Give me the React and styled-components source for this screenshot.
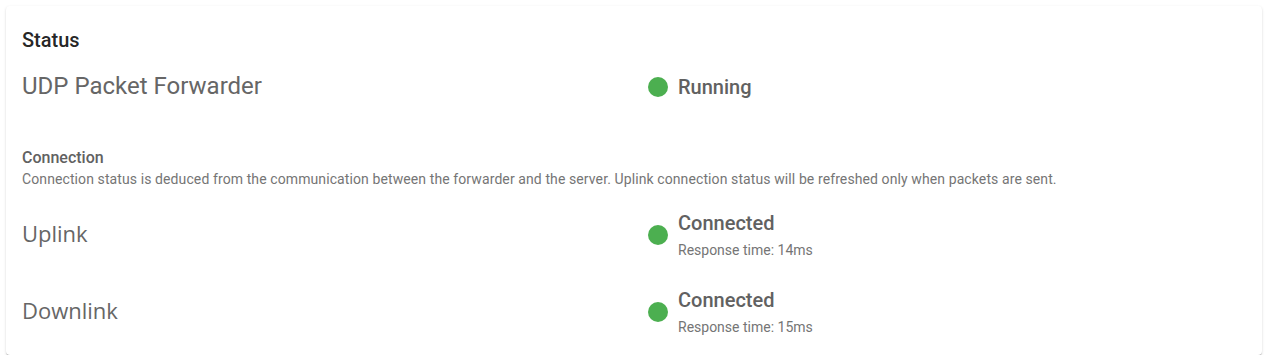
import React from "react";
import styled, { createGlobalStyle } from "styled-components";

const GlobalStyle = createGlobalStyle`
  body {
    margin: 0;
    background: #ffffff;
    font-family: Roboto, "Liberation Sans", sans-serif;
  }
`;

const Card = styled.div`
  margin: 6px 7px 0 6px;
  background: #fff;
  border-radius: 4px;
  padding: 20px 16px 17px 16px;
  box-shadow: 0 2px 1px -1px rgba(0, 0, 0, 0.2), 0 1px 1px 0 rgba(0, 0, 0, 0.14),
    0 1px 3px 0 rgba(0, 0, 0, 0.12);
`;

const Title = styled.h2`
  margin: 0;
  font-size: 20px;
  line-height: 28px;
  font-weight: 500;
  color: rgba(0, 0, 0, 0.87);
`;

const Row = styled.div`
  display: grid;
  grid-template-columns: 1fr 1fr;
  column-gap: 28px;
  align-items: center;
  min-height: 52px;
  margin-top: ${(p) => p.$top}px;
`;

const Label = styled.div`
  font-family: ${(p) => (p.$open ? '"Open Sans"' : "Roboto")}, sans-serif;
  font-size: ${(p) => (p.$open ? 22 : 24)}px;
  line-height: 30px;
  color: #666;
  padding-bottom: ${(p) => (p.$open ? 4 : 2)}px;
`;

const StatusCell = styled.div`
  display: flex;
  align-items: center;
  gap: 10px;
`;

const Dot = styled.span`
  width: 20px;
  height: 20px;
  border-radius: 50%;
  background: #4caf50;
  flex: none;
`;

const StatusText = styled.div`
  display: flex;
  flex-direction: column;
  gap: 4px;
`;

const StatusMain = styled.div`
  font-size: 20px;
  line-height: 26px;
  font-weight: 500;
  color: #616161;
`;

const StatusSub = styled.div`
  font-size: 14px;
  line-height: 20px;
  color: #757575;
`;

const Section = styled.div`
  margin-top: 34px;
`;

const SectionTitle = styled.div`
  font-size: 16px;
  line-height: 22px;
  font-weight: 500;
  color: #616161;
`;

const SectionText = styled.div`
  font-size: 14px;
  line-height: 20px;
  letter-spacing: 0.1px;
  color: #757575;
`;

function StatusRow({ label, open, status, detail, top }) {
  return (
    <Row $top={top}>
      <Label $open={open}>{label}</Label>
      <StatusCell>
        <Dot />
        <StatusText>
          <StatusMain>{status}</StatusMain>
          {detail && <StatusSub>{detail}</StatusSub>}
        </StatusText>
      </StatusCell>
    </Row>
  );
}

export default function App() {
  return (
    <>
      <GlobalStyle />
      <Card>
        <Title>Status</Title>
        <StatusRow label="UDP Packet Forwarder" status="Running" top={7} />
        <Section>
          <SectionTitle>Connection</SectionTitle>
          <SectionText>
            Connection status is deduced from the communication between the
            forwarder and the server. Uplink connection status will be refreshed
            only when packets are sent.
          </SectionText>
        </Section>
        <StatusRow
          label="Uplink"
          open
          status="Connected"
          detail="Response time: 14ms"
          top={20}
        />
        <StatusRow
          label="Downlink"
          open
          status="Connected"
          detail="Response time: 15ms"
          top={25}
        />
      </Card>
    </>
  );
}
